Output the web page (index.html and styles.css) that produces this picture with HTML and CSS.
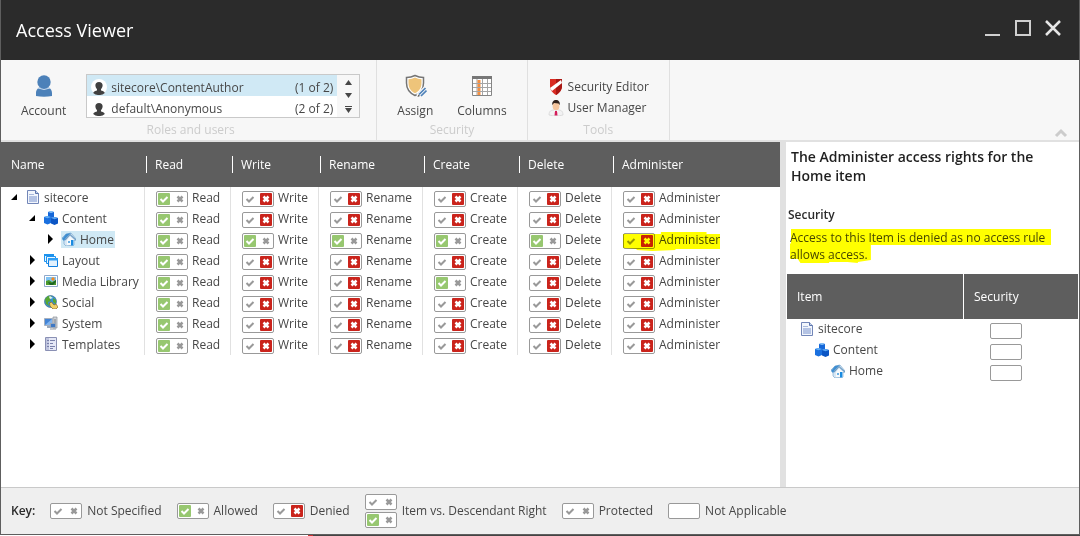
FILE: index.html
```
<!DOCTYPE html>
<html lang="en">
<head>
<meta charset="utf-8">
<title>Access Viewer</title>
<link rel="stylesheet" href="styles.css">
</head>
<body>
<svg class="sprite" aria-hidden="true">
  <symbol id="i-doc" viewBox="0 0 14 14"><path d="M1.500.5h8l3 3v10h-11z" fill="#f2f6fc" stroke="#7286b8"/><path d="M9.500.5v3h3" fill="#c5d3ea" stroke="#5c74ad"/><path d="M3 6h8v6H3z" fill="#b4c3e4"/><path d="M3 4.500h5" stroke="#a9b9dc"/></symbol>
  <symbol id="i-cubes" viewBox="0 0 14 14"><path d="M4 1l3-1 3 1v5L7 7 4 6z" fill="#1567d8"/><path d="M4 1l3-1 3 1-3 1z" fill="#8dc7fa"/><path d="M0 6l3.500-1L7 6v6l-3.500 1.500L0 12z" fill="#1a70df"/><path d="M0 6l3.500-1L7 6 3.500 7.300z" fill="#65b1f7"/><path d="M7 7l3.500-1L14 7v5.500L10.500 14 7 12.500z" fill="#0b55c4"/><path d="M7 7l3.500-1L14 7l-3.500 1.300z" fill="#5aa9f5"/></symbol>
  <symbol id="i-home" viewBox="0 0 14 14"><path d="M0 6l4-4 5-1 5 6v1l-2 .5V13L4 14l-2-2V7z" fill="#d8e8f5" stroke="#6a9cc8" stroke-width=".6"/><path d="M0 7l4-5 5-1-5 5-2 3z" fill="#3f8fd2"/><path d="M3 8l5-5.500L14 8" fill="none" stroke="#6f9cc4" stroke-width="1.200"/><path d="M5 8l3-3.500L12 8v5H5z" fill="#f7fafc"/><path d="M9 8h2.500v5.500H9z" fill="#1a8be0"/><path d="M6 9h2v2H6z" fill="#6ab0e4"/></symbol>
  <symbol id="i-layout" viewBox="0 0 14 14"><path d="M.5 1.500h9v7h-9z" fill="#e9f5ff" stroke="#1c92ee"/><path d="M0 1h10v2H0z" fill="#1c92ee"/><path d="M2.500 3.500h9v7h-9z" fill="#e9f5ff" stroke="#1c92ee"/><path d="M4.500 5.500h9v8h-9z" fill="#e3f1fd" stroke="#0f7ee0"/><path d="M4 5h10v2.500H4z" fill="#2f9ff5"/></symbol>
  <symbol id="i-media" viewBox="0 0 14 14"><path d="M.5 1.500h13v11H.5z" fill="#fff" stroke="#8fa9cc"/><path d="M2 3h10v8H2z" fill="#7fc3f4"/><path d="M2 7l3-1 3 2 4-2v5H2z" fill="#4c9a2c"/><path d="M4 8l4 1 4-3v2l-3 3H6z" fill="#1d6427"/><circle cx="9" cy="5" r="1.700" fill="#f18a22"/></symbol>
  <symbol id="i-social" viewBox="0 0 14 14"><circle cx="6.500" cy="6.500" r="6" fill="#388fd5" stroke="#456f8e" stroke-width=".7"/><path d="M1 4l3-3 4 .5L6 4l1 2-3 1 1 4-3-2zM9 3l3 2v4L9 7z" fill="#58a832"/><path d="M6 1l3 2-3 1-1-2z" fill="#dff2ef"/><path d="M5.500 8l2-1 2.500 3 2-1 2 3-2 2H9L6 11z" fill="#efd06a" stroke="#886321" stroke-width=".7"/></symbol>
  <symbol id="i-system" viewBox="0 0 14 14"><path d="M9 1h4v11H9z" fill="#cfd3d9" stroke="#8a9097" stroke-width=".7"/><path d="M.5 2.500h8v7h-8z" fill="#4384d6" stroke="#a6b0bf"/><path d="M1 9l7-6v6z" fill="#82b5ef"/><path d="M3 10h4l1 2H3zM6 7h6v5H6z" fill="#9aa8ba"/><path d="M7 8h4v3H7z" fill="#3e78c4"/><path d="M10 4h2M10 6h2" stroke="#747a83"/><path d="M6 13h6" stroke="#92979d"/></symbol>
  <symbol id="i-template" viewBox="0 0 14 14"><path d="M1.500.5h11v13h-11z" fill="#e5e8f6" stroke="#8a90b4"/><path d="M2 1h3v12H2z" fill="#c0c5df"/><path d="M3 3.500h2M6 3.500h5M3 6.500h2M6 6.500h3M3 9.500h2M6 9.500h5M6 11.500h3" stroke="#7a81aa"/></symbol>
  <symbol id="i-open" viewBox="0 0 8 8"><path d="M7 1v6H1z" fill="#000"/></symbol>
  <symbol id="i-closed" viewBox="0 0 8 10"><path d="M2 0l5 5-5 5z" fill="#000"/></symbol>
  <symbol id="i-face" viewBox="0 0 16 16"><circle cx="8" cy="8" r="8" fill="#fff"/><path d="M8 3c2.500 0 3.800 1.500 3.600 3.600-.1 1.800-1 3-1.600 3.600v1.300c1.200.5 3.500.8 3.800 2.500A8 8 0 0 1 8 16a8 8 0 0 1-5.800-2c.3-1.700 2.600-2 3.800-2.500v-1.300C5.400 9.600 4.500 8.400 4.400 6.600 4.200 4.500 5.500 3 8 3z" fill="#404040"/></symbol>
</svg>

<main class="window">
  <header class="titlebar">
    <h1>Access Viewer</h1>
    <div class="window-buttons">
      <button type="button" aria-label="Minimize"><svg width="18" height="18"><path d="M1 16h15" stroke="#d0d0d0" stroke-width="2"/></svg></button>
      <button type="button" aria-label="Maximize"><svg width="18" height="18"><path d="M2 2h14v14H2z" fill="none" stroke="#d0d0d0" stroke-width="2"/></svg></button>
      <button type="button" aria-label="Close"><svg width="18" height="18"><path d="M2 2l14 14M16 2L2 16" stroke="#e6e6e6" stroke-width="2.500"/></svg></button>
    </div>
  </header>

  <div class="ribbon">
    <section class="group accounts">
      <div class="group-items">
        <button type="button" class="big">
          <svg width="24" height="24"><circle cx="12" cy="8" r="6.700" fill="#4c81b9"/><path d="M4 22v-3c0-4 3-6 5-5.500 2 .8 4 .8 6 0 2-.5 5 1.500 5 5.500v3q-8 1.500-16 0z" fill="#4c81b9"/><path d="M6 14q6 3 12 0" fill="none" stroke="#cfdff0"/></svg>
          Account
        </button>
        <div class="listbox">
          <div class="list">
            <button type="button" class="entry selected"><svg width="16" height="16"><use href="#i-face"/></svg><span>sitecore\ContentAuthor</span><span class="count">(1 of 2)</span></button>
            <button type="button" class="entry"><svg width="16" height="16"><use href="#i-face"/></svg><span>default\Anonymous</span><span class="count">(2 of 2)</span></button>
          </div>
          <div class="spin">
            <button type="button" aria-label="Previous"><svg width="7" height="5"><path d="M0 5l3.500-5L7 5z"/></svg></button>
            <button type="button" aria-label="Next"><svg width="7" height="5"><path d="M0 0h7L3.500 5z"/></svg></button>
            <button type="button" aria-label="Show all"><svg width="7" height="7"><path d="M0 0h7v1H0zM0 2h7L3.500 7z"/></svg></button>
          </div>
        </div>
      </div>
      <h2>Roles and users</h2>
    </section>
    <section class="group security">
      <div class="group-items">
        <button type="button" class="big">
          <svg width="24" height="24"><path d="M12 1.500q4 2 8.500 2V9c0 6-3 10-8.500 12.500C6.500 19 3.500 15 3.500 9V3.500q4.500 0 8.500-2z" fill="#fff" stroke="#757575" stroke-width="1.500"/><path d="M12 3.500q3 1.500 6.500 1.700V9c0 5-2.500 8.300-6.500 10.300C8 17.300 5.500 14 5.500 9V5.200Q9 5 12 3.500z" fill="#eec47a"/><path d="M15 22l8-8" stroke="#f7f7f7" stroke-width="5"/><path d="M16 20.500l6.500-6.500M18 22l5.500-5.500" stroke="#4f82b9" stroke-width="1.700"/><path d="M14.500 23l1-2.500 1.500 1.500z" fill="#555"/></svg>
          Assign
        </button>
        <button type="button" class="big">
          <svg width="24" height="24"><path d="M2.500 3.500h19v18h-19z" fill="#fff" stroke="#858585"/><path d="M2 2h20v3H2z" fill="#777"/><path d="M7 5v16M12.500 5v16M17.500 5v16M3 9.500h18M3 13.500h18M3 17.500h18" stroke="#a5a5a5"/><path d="M7.500 6h3v3h-3zM7.500 10h3v3h-3zM7.500 14h3v3h-3zM7.500 18h3v3h-3z" fill="#f59042"/></svg>
          Columns
        </button>
      </div>
      <h2>Security</h2>
    </section>
    <section class="group tools">
      <div class="group-items">
        <button type="button" class="small"><svg width="16" height="16"><path d="M2 0h12v7c0 4-2.500 7-6 9-3.500-2-6-5-6-9z" fill="#d92b22"/><path d="M8 0h6v7c0 4-2.500 7-6 9z" fill="#a81713"/><path d="M2 9L13 1l1 3L4 12z" fill="#fff"/></svg>Security Editor</button>
        <button type="button" class="small"><svg width="16" height="16"><path d="M1 15c0-4 2-5 5-5h4c3 0 5 1 5 5-4 1.300-10 1.300-14 0z" fill="#f2f2f3" stroke="#ccc" stroke-width=".6"/><ellipse cx="8" cy="6" rx="3.400" ry="4.300" fill="#f6c69e"/><path d="M4.300 5C3.800 2 5.500 0 8 0s4.300 2 3.700 5L10.500 3.500 6 3z" fill="#30211b"/><path d="M6 10l2 2 2-2 .3 1.500L8 13l-2-1.500z" fill="#fff"/><path d="M7 11h2l.5 4.500h-3z" fill="#d41d5a"/></svg>User Manager</button>
      </div>
      <h2>Tools</h2>
    </section>
    <button type="button" class="collapse" aria-label="Collapse ribbon"><svg width="14" height="10"><path d="M2 8l5-5 5 5" fill="none" stroke="#ccc" stroke-width="3"/></svg></button>
  </div>

  <div class="content">
    <div class="rights-pane">
      <table class="rights">
        <colgroup><col class="c-name"><col class="c-read"><col class="c-write"><col class="c-rename"><col class="c-create"><col class="c-delete"><col></colgroup>
        <thead><tr><th scope="col">Name</th><th scope="col"><span>Read</span></th><th scope="col"><span>Write</span></th><th scope="col"><span>Rename</span></th><th scope="col"><span>Create</span></th><th scope="col"><span>Delete</span></th><th scope="col"><span>Administer</span></th></tr></thead>
        <tbody id="rights-body"></tbody>
      </table>
    </div>
    <aside class="details">
      <h2>The Administer access rights for the Home item</h2>
      <h3>Security</h3>
      <p><span class="reason">Access to this Item is denied as no access rule allows access.</span></p>
      <table class="items">
        <thead><tr><th scope="col">Item</th><th scope="col">Security</th></tr></thead>
        <tbody>
          <tr><td><span class="node"><svg width="14" height="14"><use href="#i-doc"/></svg>sitecore</span></td><td><span class="toggle"></span></td></tr>
          <tr><td class="level-1"><span class="node"><svg width="14" height="14"><use href="#i-cubes"/></svg>Content</span></td><td><span class="toggle"></span></td></tr>
          <tr><td class="level-2"><span class="node"><svg width="14" height="14"><use href="#i-home"/></svg>Home</span></td><td><span class="toggle"></span></td></tr>
        </tbody>
      </table>
    </aside>
  </div>

  <footer class="key">
    <strong>Key:</strong>
    <span class="key-item"><span class="toggle"><i class="mark allow"></i><i class="mark deny"></i></span>Not Specified</span>
    <span class="key-item"><span class="toggle"><i class="mark allow on"></i><i class="mark deny"></i></span>Allowed</span>
    <span class="key-item"><span class="toggle"><i class="mark allow"></i><i class="mark deny on"></i></span>Denied</span>
    <span class="key-item"><span class="stack"><span class="toggle"><i class="mark allow"></i><i class="mark deny"></i></span><span class="toggle"><i class="mark allow on"></i><i class="mark deny"></i></span></span>Item vs. Descendant Right</span>
    <span class="key-item"><span class="toggle"><i class="mark allow"></i><i class="mark deny"></i></span>Protected</span>
    <span class="key-item"><span class="toggle"></span>Not Applicable</span>
  </footer>
</main>
<script src="app.js"></script>
</body>
</html>
```
FILE: styles.css
```
* { box-sizing: border-box; }
body {
  margin: 0;
  min-height: 100vh;
  display: flex;
  flex-direction: column;
  padding-bottom: 1px;
  background: linear-gradient(90deg, #fff 308px, #c33 308px, #c33 313px, #444 313px);
  color: #474747;
  font: 12px/17px "Open Sans", "Noto Sans", sans-serif;
}
h1, h2, h3, p { margin: 0; }
button { margin: 0; padding: 0; border: 0; background: none; color: inherit; font: inherit; cursor: pointer; }
svg { display: block; flex: none; }
.sprite { position: absolute; width: 0; height: 0; }

.window {
  flex: 1;
  display: flex;
  flex-direction: column;
  background: #fff;
  border: 1px solid #5e5e5e;
  border-top: 0;
}

.titlebar {
  height: 60px;
  display: flex;
  align-items: center;
  justify-content: space-between;
  padding: 0 17px 0 15px;
  background: #2b2b2b;
  color: #fff;
}
.titlebar h1 { font-size: 18px; line-height: 24px; font-weight: 400; }
.window-buttons { display: flex; gap: 12px; padding-bottom: 4px; }

.ribbon {
  display: flex;
  height: 82px;
  background: #f7f7f7;
  border-bottom: 2px solid #e1e1e1;
}
.group {
  display: flex;
  flex-direction: column;
  justify-content: space-between;
  align-items: center;
  padding: 14px 16px 1px 20px;
  border-right: 1px solid #e0e0e0;
}
.group h2 { font-size: 12px; line-height: 18px; font-weight: 500; color: #ccc; }
.group-items { display: flex; }
.accounts .group-items { gap: 20px; }
.security { padding-right: 20px; }
.security .group-items { gap: 24px; }
.tools { padding: 18px 20px 1px; }
.tools .group-items { flex-direction: column; gap: 3px; }
.big { display: flex; flex-direction: column; align-items: center; gap: 4px; }
.small { display: flex; align-items: center; gap: 4px; line-height: 18px; }

.listbox { display: flex; width: 274px; height: 44px; border: 1px solid #c9c9c9; background: #fff; }
.list { flex: 1; display: flex; flex-direction: column; overflow: hidden; }
.entry { display: flex; align-items: center; gap: 4px; height: 21px; flex: none; padding: 3px 4px 0; text-align: left; }
.entry.selected { background: #d0e9f5; }
.count { margin-left: auto; }
.spin { width: 22px; display: flex; flex-direction: column; justify-content: space-between; align-items: center; padding: 5px 0 4px; background: #f7f7f7; fill: #474747; }
.collapse { margin: auto 11px 2px auto; }

.content { flex: 1; display: flex; }
.rights-pane { flex: 1; border-right: 6px solid #e1e1e1; }
table { border-collapse: separate; border-spacing: 0; table-layout: fixed; width: 100%; }
th { height: 45px; padding: 0 10px; background: #5e5e5e; color: #fff; text-align: left; font-weight: 500; }
td { height: 21px; padding: 0; vertical-align: top; }
.c-name { width: 144px; }
.c-read { width: 86px; }
.c-write { width: 88px; }
.c-rename { width: 104px; }
.c-create { width: 95px; }
.c-delete { width: 94px; }
.rights th + th { padding: 0 1px; }
.rights th span { display: block; border-left: 1px solid #fff; padding-left: 8px; }
.rights td { border-right: 1px solid #e1e1e1; }
.rights td:last-child { border-right: 0; }
.rights td + td { padding-left: 11px; }

.branch { display: flex; align-items: center; gap: 7px; height: 20px; padding-left: 9px; }
.level-1 .branch { padding-left: 27px; }
.level-2 .branch { padding-left: 45px; }
.expander { width: 8px; display: flex; justify-content: center; }
.node { display: inline-flex; align-items: center; gap: 4px; padding: 0 1px; white-space: nowrap; vertical-align: top; }
.node.selected { background: #d0e9f5; }

.right { display: flex; align-items: flex-start; gap: 4px; padding-top: 4px; line-height: 14px; }
.right.flagged, .reason { position: relative; }
.right.flagged { width: max-content; }
.right.flagged::after {
  content: "";
  position: absolute;
  inset: 3px 0 -2px;
  background: #ff0;
  mix-blend-mode: multiply;
  pointer-events: none;
  clip-path: polygon(0 2px, 39% 2px, 39% 0, 86% 0, 86% 2px, 100% 2px, 100% 17px, 54% 17px, 54% 18px, 30% 100%, 14% 18px, 14% 17px, 0 16px);
}
.toggle {
  flex: none;
  display: inline-flex;
  justify-content: space-between;
  width: 32px;
  height: 16px;
  padding: 1px;
  border: 1px solid #999;
  border-radius: 2px;
  background: #fff;
}
.mark { appearance: none; width: 12px; height: 12px; margin: 0; border-radius: 1px; background: center / 12px 12px no-repeat; }
.allow { background-image: url("data:image/svg+xml,%3Csvg xmlns='http://www.w3.org/2000/svg' viewBox='0 0 12 12'%3E%3Cpath d='M2.500 6l2.500 2.500L9.500 4' fill='none' stroke='%23999' stroke-width='2'/%3E%3C/svg%3E"); }
.deny { background-image: url("data:image/svg+xml,%3Csvg xmlns='http://www.w3.org/2000/svg' viewBox='0 0 12 12'%3E%3Cpath d='M3.500 3.500l5 5M8.500 3.500l-5 5' fill='none' stroke='%23999' stroke-width='2.500'/%3E%3C/svg%3E"); }
.allow.on, .allow:checked { background-color: #97c770; background-image: url("data:image/svg+xml,%3Csvg xmlns='http://www.w3.org/2000/svg' viewBox='0 0 12 12'%3E%3Cpath d='M2.500 6l2.500 2.500L9.500 4' fill='none' stroke='white' stroke-width='2'/%3E%3C/svg%3E"); }
.deny.on, .deny:checked { background-color: #ca241c; background-image: url("data:image/svg+xml,%3Csvg xmlns='http://www.w3.org/2000/svg' viewBox='0 0 12 12'%3E%3Cpath d='M3.500 3.500l5 5M8.500 3.500l-5 5' fill='none' stroke='white' stroke-width='2.500'/%3E%3C/svg%3E"); }

.details { width: 293px; padding: 5px 1px 0; color: #474747; }
.details h2 { padding: 0 4px; font-size: 14px; line-height: 19px; font-weight: 600; color: #1f1f1f; }
.details h3 { padding: 21px 1px 0; font-size: 12px; line-height: 18px; font-weight: 600; color: #2b2b2b; }
.details p { padding: 5px 3px 11px; }
.reason { display: block; }
.reason::after {
  content: "";
  position: absolute;
  inset: 0 24px -1px 0;
  background: #ff0;
  mix-blend-mode: multiply;
  pointer-events: none;
  clip-path: polygon(1px 0, 100% 0, 100% 16px, 31% 16px, 31% 31px, 26% 33px, 26% 34px, 22% 33px, 15% 33px, 15% 34px, 4% 34px, 3% 30px, 0 30px, 0 15px, 1px 14px);
}
.items th:last-child { width: 115px; border-left: 1px solid #fff; }
.items td { padding: 1px 0 0 12px; }
.items .level-1 { padding-left: 27px; }
.items .level-2 { padding-left: 43px; }
.items td:last-child { padding: 4px 0 0 27px; line-height: 0; }

.key { display: flex; align-items: center; gap: 15px; height: 47px; padding: 0 10px 1px; background: #efefef; border-top: 1px solid #c9c9c9; white-space: nowrap; }
.key strong { font-weight: 600; color: #2b2b2b; }
.key-item { display: flex; align-items: center; gap: 5px; }
.stack { display: flex; flex-direction: column; gap: 2px; }
```
FILE: app.js
```
const rights = ["Read", "Write", "Rename", "Create", "Delete", "Administer"];

// Each letter of `access` is one right: a = allowed, d = denied.
const items = [
  { name: "sitecore", icon: "doc", level: 0, open: true, access: "addddd" },
  { name: "Content", icon: "cubes", level: 1, open: true, access: "addddd" },
  { name: "Home", icon: "home", level: 2, access: "aaaaad", selected: true },
  { name: "Layout", icon: "layout", level: 1, access: "addddd" },
  { name: "Media Library", icon: "media", level: 1, access: "addadd" },
  { name: "Social", icon: "social", level: 1, access: "addddd" },
  { name: "System", icon: "system", level: 1, access: "addddd" },
  { name: "Templates", icon: "template", level: 1, access: "addddd" },
];

function rightCell(item, right, i) {
  const allowed = item.access[i] === "a";
  const id = `${item.name}-${right}`.replace(" ", "-");
  const flagged = item.selected && right === "Administer" ? " flagged" : "";
  return `<td><div class="right${flagged}"><span class="toggle">
    <input type="checkbox" class="mark allow" id="${id}" ${allowed ? "checked" : ""}>
    <input type="checkbox" class="mark deny" aria-label="Deny ${right} on ${item.name}" ${allowed ? "" : "checked"}>
  </span><label for="${id}">${right}</label></div></td>`;
}

document.getElementById("rights-body").innerHTML = items.map(item => `
  <tr><td class="level-${item.level}"><div class="branch">
    <button type="button" class="expander" aria-label="${item.open ? "Collapse" : "Expand"} ${item.name}">
      <svg width="8" height="${item.open ? 8 : 10}"><use href="#i-${item.open ? "open" : "closed"}"/></svg>
    </button>
    <span class="node${item.selected ? " selected" : ""}"><svg width="14" height="14"><use href="#i-${item.icon}"/></svg>${item.name}</span>
  </div></td>${rights.map((right, i) => rightCell(item, right, i)).join("")}</tr>`).join("");
```
